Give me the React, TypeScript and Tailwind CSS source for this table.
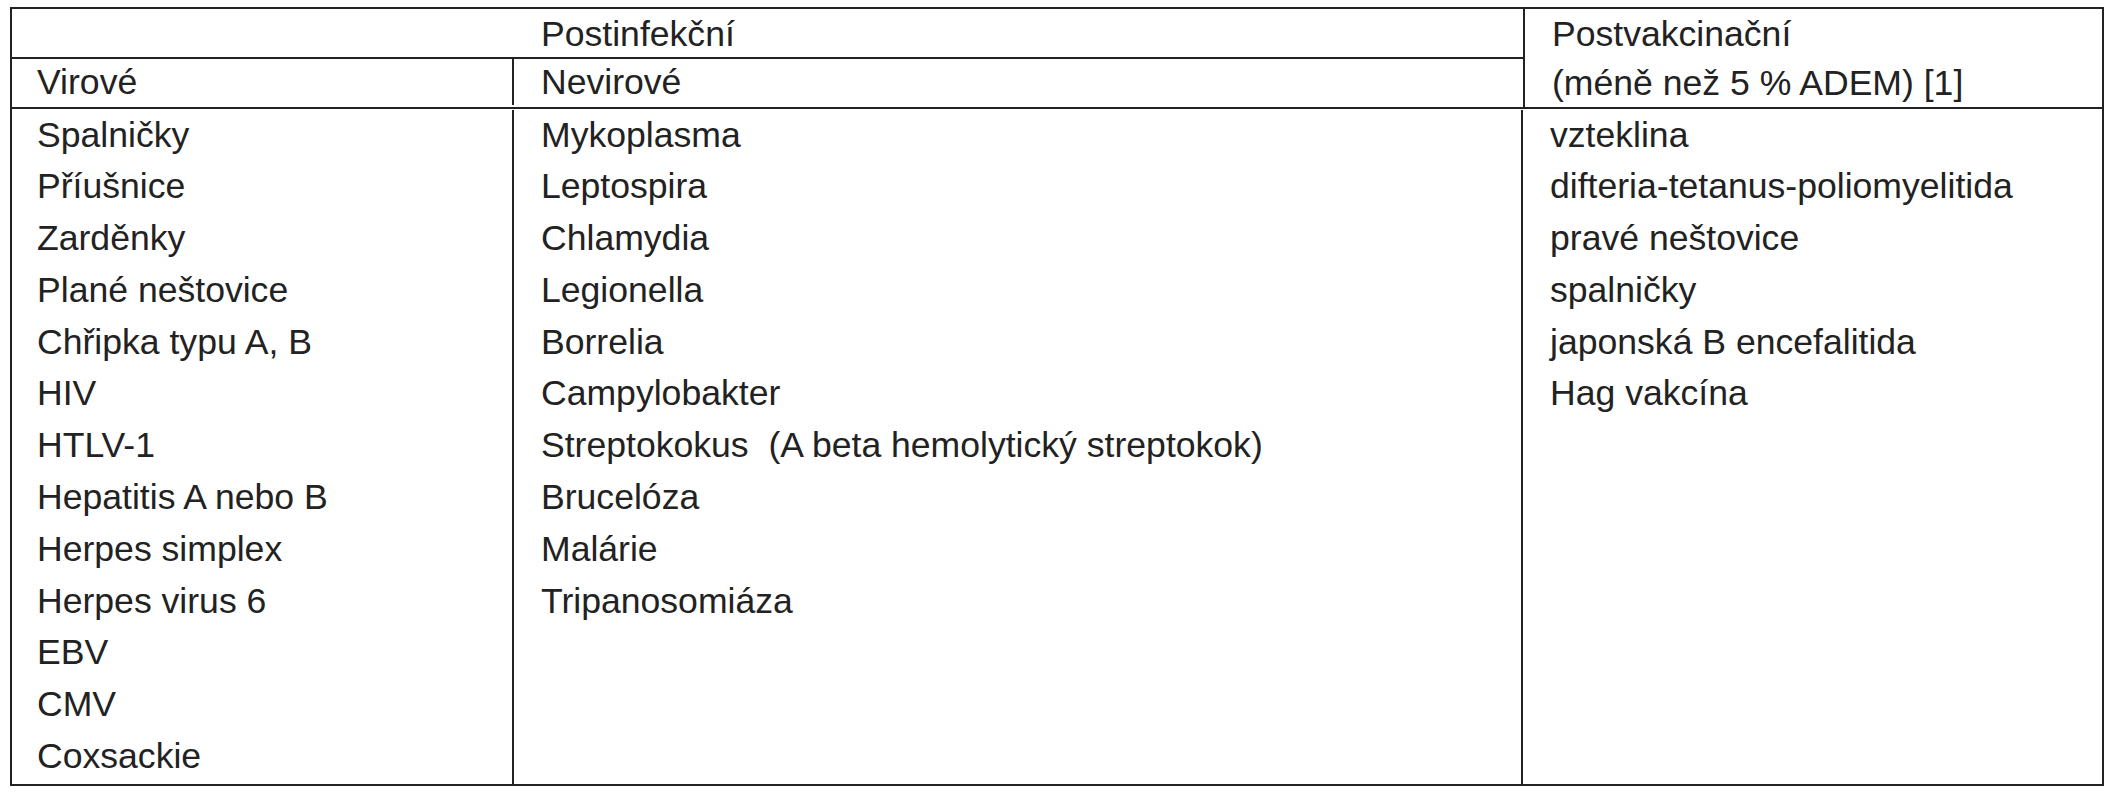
import React from 'react';

const virove = [
  'Spalničky',
  'Příušnice',
  'Zarděnky',
  'Plané neštovice',
  'Chřipka typu A, B',
  'HIV',
  'HTLV-1',
  'Hepatitis A nebo B',
  'Herpes simplex',
  'Herpes virus 6',
  'EBV',
  'CMV',
  'Coxsackie',
];

const nevirove = [
  'Mykoplasma',
  'Leptospira',
  'Chlamydia',
  'Legionella',
  'Borrelia',
  'Campylobakter',
  'Streptokokus\u00a0 (A beta hemolytický streptokok)',
  'Brucelóza',
  'Malárie',
  'Tripanosomiáza',
];

const postvakcinacni = [
  'vzteklina',
  'difteria-tetanus-poliomyelitida',
  'pravé neštovice',
  'spalničky',
  'japonská B encefalitida',
  'Hag vakcína',
];

function List({ items, className }: { items: string[]; className: string }) {
  return (
    <ul className={className}>
      {items.map((item) => (
        <li key={item} className="h-[51.8px] leading-[51.8px] whitespace-nowrap">
          {item}
        </li>
      ))}
    </ul>
  );
}

export default function App() {
  return (
    <div
      className="w-[2112px] h-[800px] bg-white pl-[10px] pt-[7px] text-[35.6px] text-[#222]"
      style={{ fontFamily: '"Liberation Sans", Arial, sans-serif' }}
    >
      <div className="w-[2094px] border-2 border-[#222]">
        <div className="flex border-b-2 border-[#222]">
          <div className="flex w-[1511px] flex-col">
            <div className="h-[50px] border-b-2 border-[#222] pl-[529px] leading-[50px]">Postinfekční</div>
            <div className="flex h-[46px] leading-[47px]">
              <div className="w-[500px] pl-[25px]">Virové</div>
              <div className="flex-1 border-l-2 border-[#222] pl-[27px]">Nevirové</div>
            </div>
          </div>
          <div className="flex-1 border-l-2 border-[#222] pl-[27px]">
            <div className="h-[52px] leading-[50px]">Postvakcinační</div>
            <div className="h-[46px] leading-[45px]">(méně než 5 % ADEM) [1]</div>
          </div>
        </div>
        <div className="flex h-[675px] pt-[0.5px]">
          <List items={virove} className="w-[500px] pl-[25px]" />
          <List items={nevirove} className="w-[1009px] border-l-2 border-[#222] pl-[27px]" />
          <List items={postvakcinacni} className="flex-1 border-l-2 border-[#222] pl-[27px]" />
        </div>
      </div>
    </div>
  );
}
